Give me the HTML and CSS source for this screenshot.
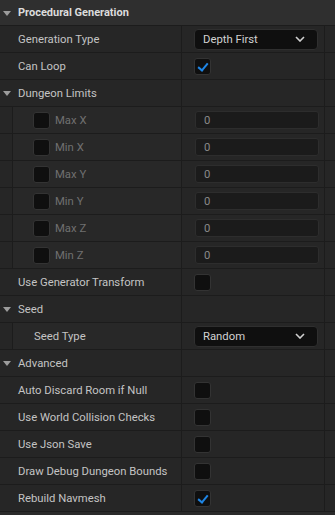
FILE: index.html
```html
<!DOCTYPE html>
<html lang="en">
<head>
  <meta charset="UTF-8" />
  <title>Details</title>
  <link rel="stylesheet" href="styles.css">
</head>
<body>
  <div class="panel">
    <div class="row category">
      <div class="name"><span class="arrow"></span>Procedural Generation</div>
    </div>

    <div class="row">
      <div class="name">Generation Type</div>
      <div class="value">
        <div class="combo"><span>Depth First</span><svg class="chev" width="10" height="6" viewBox="0 0 10 6"><path d="M1 1l4 4 4-4" fill="none" stroke="#d0d0d0" stroke-width="1.6"/></svg></div>
      </div>
      <div class="extra"></div>
    </div>

    <div class="row">
      <div class="name">Can Loop</div>
      <div class="value"><span class="check on"></span></div>
      <div class="extra"></div>
    </div>

    <div class="row group">
      <div class="name"><span class="arrow"></span>Dungeon Limits</div>
      <div class="value"></div>
      <div class="extra"></div>
    </div>

    <div class="row nested">
      <div class="name"><span class="band"></span><span class="check"></span><span class="dim">Max X</span></div>
      <div class="value"><div class="num">0</div></div>
      <div class="extra"></div>
    </div>
    <div class="row nested">
      <div class="name"><span class="band"></span><span class="check"></span><span class="dim">Min X</span></div>
      <div class="value"><div class="num">0</div></div>
      <div class="extra"></div>
    </div>
    <div class="row nested">
      <div class="name"><span class="band"></span><span class="check"></span><span class="dim">Max Y</span></div>
      <div class="value"><div class="num">0</div></div>
      <div class="extra"></div>
    </div>
    <div class="row nested">
      <div class="name"><span class="band"></span><span class="check"></span><span class="dim">Min Y</span></div>
      <div class="value"><div class="num">0</div></div>
      <div class="extra"></div>
    </div>
    <div class="row nested">
      <div class="name"><span class="band"></span><span class="check"></span><span class="dim">Max Z</span></div>
      <div class="value"><div class="num">0</div></div>
      <div class="extra"></div>
    </div>
    <div class="row nested">
      <div class="name"><span class="band"></span><span class="check"></span><span class="dim">Min Z</span></div>
      <div class="value"><div class="num">0</div></div>
      <div class="extra"></div>
    </div>

    <div class="row">
      <div class="name">Use Generator Transform</div>
      <div class="value"><span class="check"></span></div>
      <div class="extra"></div>
    </div>

    <div class="row group">
      <div class="name"><span class="arrow"></span>Seed</div>
      <div class="value"></div>
      <div class="extra"></div>
    </div>

    <div class="row nested">
      <div class="name"><span class="band"></span><span class="sub">Seed Type</span></div>
      <div class="value">
        <div class="combo"><span>Random</span><svg class="chev" width="10" height="6" viewBox="0 0 10 6"><path d="M1 1l4 4 4-4" fill="none" stroke="#d0d0d0" stroke-width="1.6"/></svg></div>
      </div>
      <div class="extra"></div>
    </div>

    <div class="row group">
      <div class="name"><span class="arrow"></span>Advanced</div>
      <div class="value"></div>
      <div class="extra"></div>
    </div>

    <div class="row">
      <div class="name">Auto Discard Room if Null</div>
      <div class="value"><span class="check"></span></div>
      <div class="extra"></div>
    </div>
    <div class="row">
      <div class="name">Use World Collision Checks</div>
      <div class="value"><span class="check"></span></div>
      <div class="extra"></div>
    </div>
    <div class="row">
      <div class="name">Use Json Save</div>
      <div class="value"><span class="check"></span></div>
      <div class="extra"></div>
    </div>
    <div class="row">
      <div class="name">Draw Debug Dungeon Bounds</div>
      <div class="value"><span class="check"></span></div>
      <div class="extra"></div>
    </div>
    <div class="row">
      <div class="name">Rebuild Navmesh</div>
      <div class="value"><span class="check on"></span></div>
      <div class="extra"></div>
    </div>
  </div>
</body>
</html>
```

FILE: styles.css
```css
:root {
  --row: #262626;
  --line: #1c1c1c;
  --header: #2f2f2f;
  --text: #c4c4c4;
  --dim: #707070;
  --blue: #1f86e6;
}

* {
  box-sizing: border-box;
  margin: 0;
  padding: 0;
}

body {
  background: #2a2a2a;
  font-family: Roboto, "Liberation Sans", sans-serif;
  font-size: 11.3px;
  color: var(--text);
}

.panel {
  width: 335px;
  display: flex;
  flex-direction: column;
}

.row {
  display: flex;
  height: 27px;
  background: var(--row);
  border-bottom: 1px solid var(--line);
}

.row .name {
  width: 182px;
  border-right: 1px solid var(--line);
  display: flex;
  align-items: center;
  padding-left: 18px;
  position: relative;
}

.row .value {
  width: 143px;
  border-right: 1px solid var(--line);
  display: flex;
  align-items: center;
  padding-left: 12px;
}

.row .extra {
  flex: 1;
}

/* category header */
.row.category {
  height: 26px;
  background: var(--header);
}

.row.category .name {
  width: 100%;
  border-right: none;
  font-weight: 700;
  font-size: 11px;
  color: #dcdcdc;
}

.arrow {
  position: absolute;
  left: 3px;
  top: 50%;
  margin-top: -2px;
  width: 0;
  height: 0;
  border-left: 4px solid transparent;
  border-right: 4px solid transparent;
  border-top: 5px solid #9c9c9c;
}

/* nested rows */
.row.nested .name {
  padding-left: 33px;
  background: #282828;
}

.band {
  position: absolute;
  left: 0;
  top: 0;
  bottom: 0;
  width: 13px;
  background: var(--row);
  border-right: 1px solid var(--line);
}

.sub {
  margin-left: 1px;
}

.dim {
  color: var(--dim);
  margin-left: 5px;
}

/* widgets */
.check {
  width: 17px;
  height: 17px;
  border-radius: 3px;
  background: #0f0f0f;
  border: 1px solid #333;
  display: inline-block;
  position: relative;
}

.check.on::after {
  content: "";
  position: absolute;
  left: 5px;
  top: 2px;
  width: 4px;
  height: 8px;
  border-right: 2px solid var(--blue);
  border-bottom: 2px solid var(--blue);
  transform: rotate(40deg);
}

.combo {
  width: 124px;
  height: 21px;
  background: #0f0f0f;
  border: 1px solid #2f2f2f;
  border-radius: 4px;
  display: flex;
  align-items: center;
  justify-content: space-between;
  padding: 0 12px 0 8px;
  color: #d2d2d2;
}

.num {
  width: 124px;
  height: 18px;
  background: #1b1b1b;
  border: 1px solid #2d2d2d;
  border-radius: 3px;
  display: flex;
  align-items: center;
  padding-left: 8px;
  color: #8a8a8a;
  margin-left: 1px;
}
```
